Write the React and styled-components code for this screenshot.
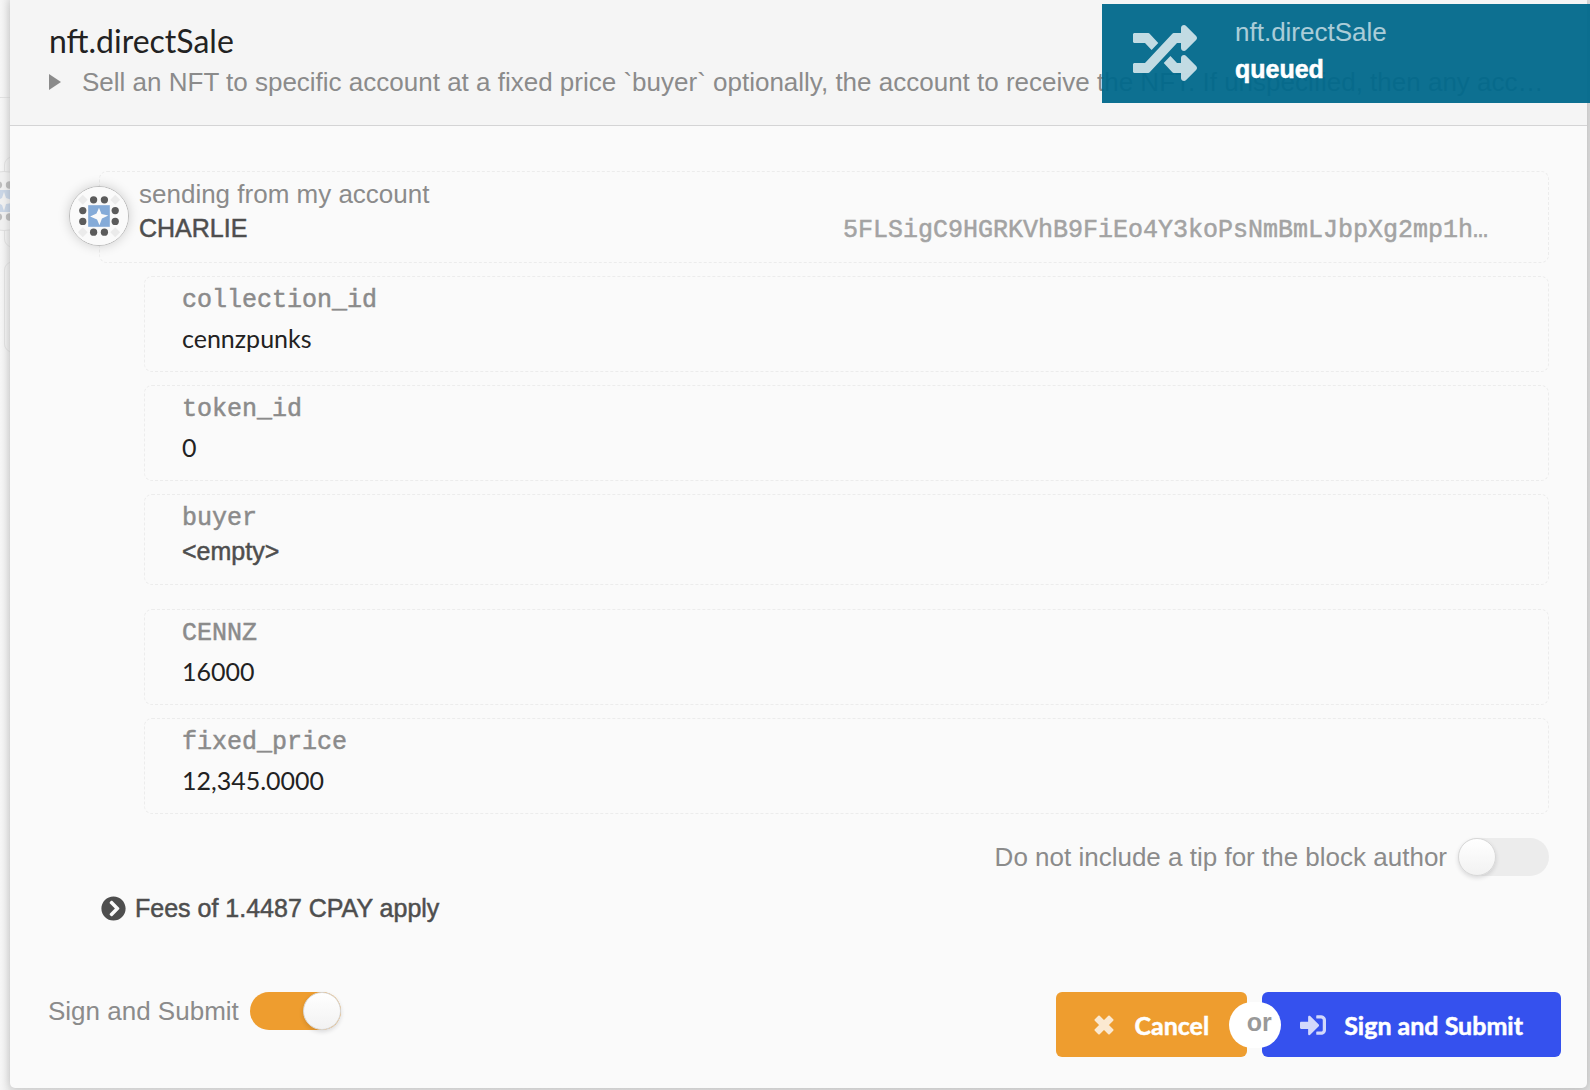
import React, { useState } from 'react';
import styled, { createGlobalStyle } from 'styled-components';
import { FaRandom, FaSignInAlt, FaChevronCircleRight } from 'react-icons/fa';

const sans = `"Liberation Sans", Arial, sans-serif`;
const lato = `Lato, "Liberation Sans", sans-serif`;
const mono = `"Liberation Mono", "Courier New", monospace`;

const GlobalStyle = createGlobalStyle`
  *, *::before, *::after { box-sizing: border-box; }
  body { margin: 0; background: #ececec; font-family: ${sans}; font-size: 26px; line-height: 32px; color: #4e4e4e; }
  h1, p { margin: 0; font-weight: 400; }
`;

const Page = styled.div`
  position: relative;
  min-height: 100vh;
  padding: 0 3px 2px 10px;
  overflow: hidden;
  display: flex;
  background: linear-gradient(to right, #f6f6f6, #eaeaea 10px, #dedede);
`;

const Backdrop = styled.svg`
  position: absolute;
  top: 90px;
  left: 0;
`;

const Modal = styled.main`
  position: relative;
  flex: 1;
  min-width: 0;
  background: #fafafa;
  border-radius: 0 0 5px 5px;
  box-shadow: 0 1px 8px rgba(0, 0, 0, 0.18);
`;

const Header = styled.header`
  height: 126px;
  padding: 21px 43px 0 39px;
  background: #f5f5f5;
  border-bottom: 1px solid #d4d4d5;
`;

const Title = styled.h1`
  font-family: ${lato};
  font-size: 32px;
  line-height: 40px;
  color: #222;
`;

const Description = styled.button`
  display: flex;
  align-items: center;
  gap: 21px;
  width: 100%;
  padding: 5px 0 0;
  border: 0;
  background: none;
  color: #8b8b8b;
  font: inherit;
  text-align: left;
  svg { flex: none; }
  span { overflow: hidden; text-overflow: ellipsis; white-space: nowrap; }
`;

const Content = styled.section`
  padding: 45px 38px 0 59px;
`;

const Panel = styled.div`
  border: 1px dashed #ececec;
  border-radius: 8px;
`;

const Account = styled.div`
  display: flex;
`;

const AccountPanel = styled(Panel)`
  flex: 1;
  min-width: 0;
  height: 92px;
  margin-left: -30px;
  padding: 5px 60px 0 39px;
`;

const Avatar = styled.svg`
  position: relative;
  flex: none;
  width: 60px;
  height: 60px;
  margin-top: 15px;
  border: 1px solid #bcbcbc;
  border-radius: 50%;
  box-shadow: 0 0 12px rgba(0, 0, 0, 0.18);
`;

const Label = styled.p`
  color: #8b8b8b;
  line-height: 34px;
`;

const AccountLine = styled.div`
  display: flex;
  align-items: baseline;
  justify-content: space-between;
  line-height: 34px;
`;

const Name = styled.span`
  font-size: 25px;
  -webkit-text-stroke: 0.5px currentColor;
`;

const Address = styled.span`
  font-family: ${mono};
  font-size: 25px;
  color: #a3a3a3;
  -webkit-text-stroke: 0.5px currentColor;
`;

const Params = styled.dl`
  display: flex;
  flex-direction: column;
  gap: 13px;
  margin: 13px 0 0 75px;
`;

const Param = styled(Panel)`
  height: ${(p) => (p.$empty ? 91 : 96)}px;
  margin-bottom: ${(p) => (p.$empty ? 11 : 0)}px;
  padding: 8px 37px 0;
  dt {
    font-family: ${mono};
    font-size: 25px;
    color: #8b8b8b;
    -webkit-text-stroke: 0.5px currentColor;
  }
  dd {
    margin: ${(p) => (p.$empty ? 0 : 5)}px 0 0;
    font-family: ${(p) => (p.$empty ? sans : lato)};
    font-size: 25px;
    color: ${(p) => (p.$empty ? '#4e4e4e' : '#222')};
    -webkit-text-stroke: ${(p) => (p.$empty ? '0.5px' : '0')} currentColor;
  }
`;

const SwitchLabel = styled.label`
  display: flex;
  align-items: center;
  justify-content: ${(p) => (p.$end ? 'flex-end' : 'flex-start')};
  gap: 11px;
  color: #8b8b8b;
`;

const Switch = styled.input`
  appearance: none;
  flex: none;
  display: flex;
  width: 91px;
  height: 38px;
  margin: 0;
  border-radius: 19px;
  background: #ececec;
  &::before {
    content: '';
    width: 38px;
    height: 38px;
    border: 1px solid #d8d8d8;
    border-radius: 50%;
    background: linear-gradient(#fff, #f2f2f2);
    box-shadow: 0 2px 4px rgba(34, 36, 38, 0.15);
  }
  &:checked { background: #ee9d2f; justify-content: flex-end; }
`;

const Tip = styled.div`
  margin-top: 24px;
`;

const Fees = styled.button`
  display: flex;
  align-items: center;
  gap: 9px;
  margin: 16px 0 0 32px;
  padding: 0;
  border: 0;
  background: none;
  color: #4e4e4e;
  font: inherit;
  font-size: 25px;
  -webkit-text-stroke: 0.5px currentColor;
  svg { -webkit-text-stroke: 0; }
`;

const Footer = styled.footer`
  display: flex;
  justify-content: space-between;
  align-items: flex-start;
  padding: 68px 26px 28px 38px;
`;

const ButtonGroup = styled.div`
  display: flex;
  align-items: center;
`;

const Button = styled.button`
  display: flex;
  align-items: center;
  gap: ${(p) => (p.$primary ? 18 : 20)}px;
  height: 65px;
  padding: 0 38px;
  border: 0;
  border-radius: 6px;
  background: ${(p) => (p.$primary ? '#3551ee' : '#ee9d2f')};
  color: #fff;
  font: 700 25px/32px ${lato};
  -webkit-text-stroke: 0.5px currentColor;
  svg { opacity: 0.78; }
`;

const Or = styled.span`
  position: relative;
  width: 52px;
  height: 46px;
  margin: 0 -19px 0 -18px;
  padding: 4px 0 0 8px;
  border-radius: 23px;
  background: #fff;
  color: #999;
  font-size: 25px;
  font-weight: 700;
  text-align: center;
`;

const Toast = styled.aside`
  position: absolute;
  top: 4px;
  right: 0;
  display: flex;
  align-items: center;
  gap: 38px;
  width: 488px;
  height: 99px;
  padding: 0 31px 2px;
  background: rgba(0, 104, 139, 0.95);
  color: #fff;
  svg { opacity: 0.75; }
`;

const ToastText = styled.div`
  align-self: flex-start;
  padding-top: 10px;
  line-height: 37px;
  p { opacity: 0.65; }
  strong {
    display: block;
    font-size: 25px;
    -webkit-text-stroke: 0.5px currentColor;
  }
`;

const params = [
  ['collection_id', 'cennzpunks'],
  ['token_id', '0'],
  ['buyer', '<empty>'],
  ['CENNZ', '16000'],
  ['fixed_price', '12,345.0000'],
];

const dots = [
  [24, 13], [35, 13], [13, 24], [46, 24], [13, 35], [46, 35], [24, 46], [35, 46],
];
const corners = [[13, 13], [46, 13], [13, 46], [46, 46]];

function Identicon() {
  return (
    <Avatar viewBox="0 0 59 59" aria-hidden="true">
      <rect width="59" height="59" fill="#fafafa" />
      {corners.map(([x, y]) => (
        <path key={`${x}-${y}`} d={`M${x} ${y - 5}l5 5-5 5-5-5z`} fill="#ebebeb" />
      ))}
      {dots.map(([x, y]) => (
        <circle key={`${x}-${y}`} cx={x} cy={y} r="3.7" fill="#5b5b5b" />
      ))}
      <rect x="18.500" y="18.500" width="22" height="22" fill="#85abd8" />
      <path d="M29.500 21l2.500 6.500 7 1.500-6.500 3-2.500 7-2.500-6-7-3 6.500-3z" fill="#fafafa" />
    </Avatar>
  );
}

/* Faded page content that shows beside the modal's left edge. */
function PageBehind() {
  return (
    <Backdrop width="12" height="270" viewBox="0 0 12 270" fill="none" aria-hidden="true">
      <path d="M0 7.500h12M12 67a8 8 0 0 0-7.500 8v74a8 8 0 0 0 7.500 8M12 172a8 8 0 0 0-7.500 8v74a8 8 0 0 0 7.500 8" stroke="#e0e0e0" />
      <circle cx="4" cy="111" r="29.500" fill="#f0f0f0" stroke="#dedede" />
      <path d="M0 100h12v22H0z" fill="#c9d5e5" />
      <path d="M4 102l2 6 6 2v3l-6 1-2 7-2-6-2-1v-5l2-1z" fill="#f0f0f0" />
      <g fill="#bdbdbd">
        <circle cx="-1.500" cy="95" r="3.700" />
        <circle cx="9.500" cy="95" r="3.700" />
        <circle cx="-1.500" cy="127" r="3.700" />
        <circle cx="9.500" cy="127" r="3.700" />
      </g>
    </Backdrop>
  );
}

function CloseIcon() {
  return (
    <svg width="20" height="20" viewBox="0 0 20 20" fill="currentColor" stroke="currentColor" strokeWidth="2" strokeLinejoin="round" aria-hidden="true">
      <path d="M5 1.500L10 6.500l5-5L18.500 5l-5 5 5 5-3.500 3.500-5-5-5 5L1.500 15l5-5-5-5z" />
    </svg>
  );
}

export default function App() {
  const [tip, setTip] = useState(false);
  const [sign, setSign] = useState(true);
  return (
    <Page>
      <GlobalStyle />
      <PageBehind />
      <Modal>
        <Header>
          <Title>nft.directSale</Title>
          <Description type="button">
            <svg width="12" height="16" viewBox="0 0 12 16" fill="currentColor" aria-hidden="true">
              <path d="M0 0l12 8-12 8z" />
            </svg>
            <span>
              Sell an NFT to specific account at a fixed price `buyer` optionally, the account to receive the NFT. If
              unspecified, then any account may purchase
            </span>
          </Description>
        </Header>
        <Content>
          <Account>
            <Identicon />
            <AccountPanel>
              <Label>sending from my account</Label>
              <AccountLine>
                <Name>CHARLIE</Name>
                <Address>5FLSigC9HGRKVhB9FiEo4Y3koPsNmBmLJbpXg2mp1h…</Address>
              </AccountLine>
            </AccountPanel>
          </Account>
          <Params>
            {params.map(([name, value]) => (
              <Param key={name} $empty={value === '<empty>'}>
                <dt>{name}</dt>
                <dd>{value}</dd>
              </Param>
            ))}
          </Params>
          <Tip>
            <SwitchLabel $end>
              Do not include a tip for the block author
              <Switch type="checkbox" role="switch" checked={tip} onChange={() => setTip(!tip)} />
            </SwitchLabel>
          </Tip>
          <Fees type="button">
            <FaChevronCircleRight size={25} />
            Fees of 1.4487 CPAY apply
          </Fees>
        </Content>
        <Footer>
          <SwitchLabel>
            Sign and Submit
            <Switch type="checkbox" role="switch" checked={sign} onChange={() => setSign(!sign)} />
          </SwitchLabel>
          <ButtonGroup>
            <Button type="button">
              <CloseIcon />
              Cancel
            </Button>
            <Or>or</Or>
            <Button type="button" $primary>
              <FaSignInAlt size={26} />
              Sign and Submit
            </Button>
          </ButtonGroup>
        </Footer>
      </Modal>
      <Toast role="status">
        <FaRandom size={64} />
        <ToastText>
          <p>nft.directSale</p>
          <strong>queued</strong>
        </ToastText>
      </Toast>
    </Page>
  );
}
